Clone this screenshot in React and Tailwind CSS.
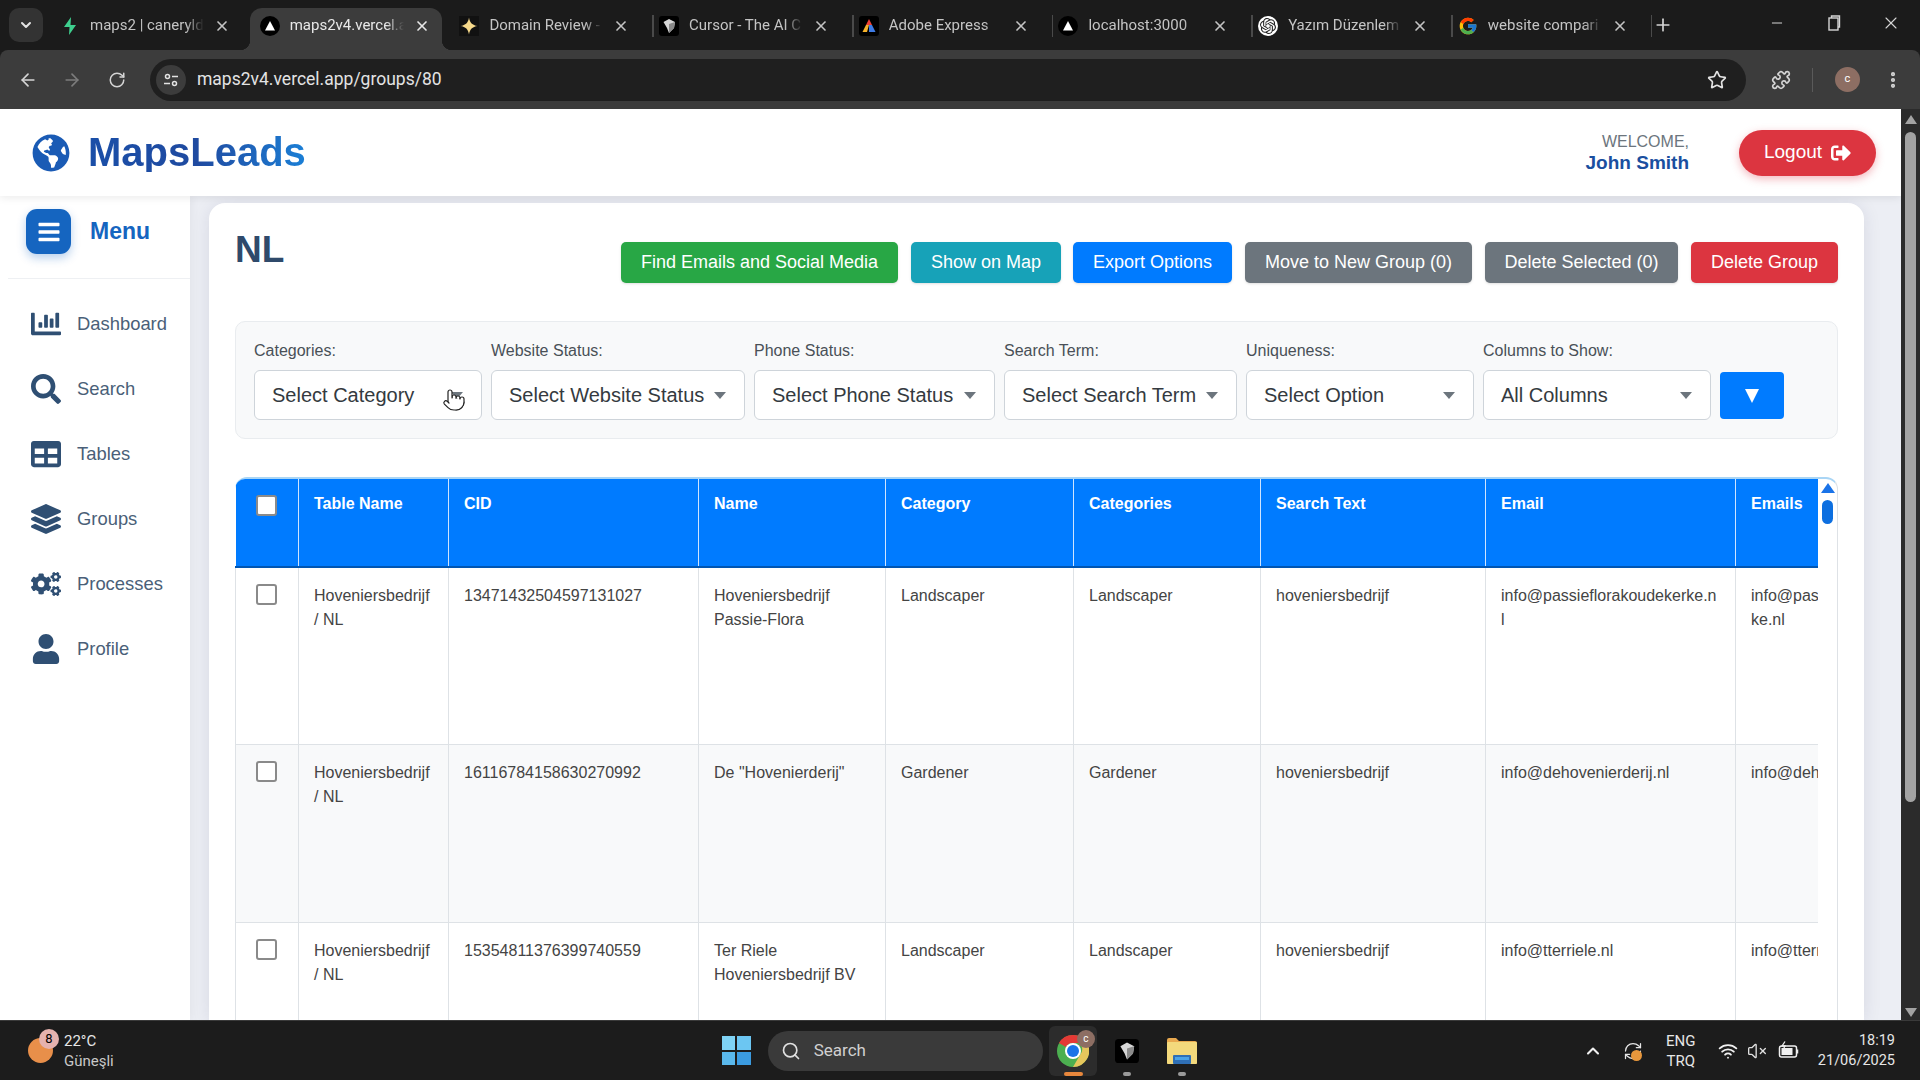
import { ArrowLeft, ArrowRight, RotateCw, Star, Puzzle, EllipsisVertical, ChevronDown, ChevronUp, X, Plus, Minus, Search, Pointer, Wifi, VolumeX, RefreshCw } from 'lucide-react';
import { FaBars, FaChartBar, FaCogs, FaGlobeAmericas, FaLayerGroup, FaSearch, FaSignOutAlt, FaTable, FaUser } from 'react-icons/fa';
import { FcGoogle } from 'react-icons/fc';
import { SiOpenai } from 'react-icons/si';

/* ─── Favicons ───────────────────────────────────────────────────────── */
function BoltIcon() {
  return (
    <svg viewBox="0 0 20 20" className="w-5 h-5">
      <polygon points="11,1 4,11 9.5,11 9,19 16,9 10.5,9" fill="#3ecf8e" />
    </svg>
  );
}

function VercelIcon() {
  return (
    <svg viewBox="0 0 20 20" className="w-5 h-5">
      <circle cx="10" cy="10" r="10" fill="#000" />
      <polygon points="10,5 15,14.5 5,14.5" fill="#fff" />
    </svg>
  );
}

function SparkIcon() {
  return (
    <svg viewBox="0 0 20 20" className="w-5 h-5">
      <rect width="20" height="20" fill="#111" />
      <path d="M10 1.5C10.6 6.5 13.5 9.4 18.5 10 13.5 10.6 10.6 13.5 10 18.5 9.4 13.5 6.5 10.6 1.5 10 6.5 9.4 9.4 6.5 10 1.5Z" fill="#f6d98b" />
    </svg>
  );
}

function CubeIcon({ size = 'w-5 h-5' }) {
  return (
    <svg viewBox="0 0 20 20" className={size}>
      <rect width="20" height="20" rx="3" fill="#000" />
      <polygon points="10,3 16,6 15,12 10,17 8,12 4.5,6" fill="#d6d6d6" />
      <polygon points="10,8 16,6 15,12 10,17" fill="#8a8a8a" />
    </svg>
  );
}

function AdobeIcon() {
  return (
    <svg viewBox="0 0 20 20" className="w-5 h-5">
      <rect width="20" height="20" rx="3" fill="#000" />
      <polygon points="10,3 13,9 7,9" fill="#ef4136" />
      <polygon points="7,9 10,9 8,16 3.5,16" fill="#f7b32b" />
      <polygon points="10,9 13,9 16.5,16 10,16" fill="#3e7be6" />
    </svg>
  );
}

function OpenAiIcon() {
  return (
    <span className="w-5 h-5 rounded-full bg-white flex items-center justify-center">
      <SiOpenai className="w-4 h-4 text-[#222]" />
    </span>
  );
}

function ChromeIcon() {
  return (
    <svg viewBox="0 0 32 32" className="w-[32px] h-[32px]">
      <circle cx="16" cy="16" r="16" fill="#4caf50" />
      <path d="M2 8A16 16 0 0 1 16 0 16 16 0 0 1 30 8H16A8 8 0 0 0 9 12Z" fill="#e53935" />
      <path d="M30 8A16 16 0 0 1 16 32L23 20A8 8 0 0 0 22 8Z" fill="#e6c65c" />
      <circle cx="16" cy="16" r="8" fill="#fff" />
      <circle cx="16" cy="16" r="6" fill="#1a73e8" />
    </svg>
  );
}

function FolderIcon() {
  return (
    <svg viewBox="0 0 30 26" className="w-[30px] h-[26px]">
      <path d="M0 2a2 2 0 0 1 2-2h7l3 3h16a2 2 0 0 1 2 2v19a2 2 0 0 1-2 2H2a2 2 0 0 1-2-2Z" fill="#e9a94f" />
      <rect y="4" width="30" height="22" rx="1" fill="#f3d97c" />
      <rect x="6" y="17" width="18" height="9" rx="1" fill="#2f6fb5" />
      <rect x="8" y="19" width="14" height="3" fill="#4aa3e8" />
    </svg>
  );
}

function BatteryIcon() {
  return (
    <svg viewBox="0 0 22 20" className="w-[22px] h-[20px]" fill="none">
      <rect x="2.5" y="5" width="17" height="11" rx="2" stroke="#f0f0f0" strokeWidth="1.5" />
      <rect x="4.5" y="7" width="11" height="7" fill="#f0f0f0" />
      <path d="M20.5 8.5v4" stroke="#f0f0f0" strokeWidth="1.5" />
      <path d="M8 0.5 5 5h3L6.5 8" stroke="#f0f0f0" strokeWidth="1.3" />
    </svg>
  );
}

function WinLogo() {
  return (
    <div className="grid grid-cols-2 gap-[2px] w-[29px] h-[29px]">
      <span className="bg-[#7fd3f5]" />
      <span className="bg-[#6cc6f2]" />
      <span className="bg-[#5ab8ec]" />
      <span className="bg-[#3b9be0]" />
    </div>
  );
}

/* ─── Browser chrome ─────────────────────────────────────────────────── */
const TABS = [
  { title: 'maps2 | caneryld', icon: <BoltIcon /> },
  { title: 'maps2v4.vercel.a', icon: <VercelIcon />, active: true },
  { title: 'Domain Review -', icon: <SparkIcon /> },
  { title: 'Cursor - The AI C', icon: <CubeIcon /> },
  { title: 'Adobe Express', icon: <AdobeIcon /> },
  { title: 'localhost:3000', icon: <VercelIcon /> },
  { title: 'Yazım Düzenlem', icon: <OpenAiIcon /> },
  { title: 'website compari', icon: <FcGoogle className="w-5 h-5" /> },
];

function Tab({ tab, hideSep }) {
  return (
    <div className="flex-none w-[199.7px] h-[42px] pb-[7px] flex items-center relative">
      {tab.active && (
        <>
          <div className="absolute left-0 top-0 bottom-0 w-[192px] bg-[#3c3c3c] rounded-t-[12px]" />
          <div className="absolute left-[-10px] bottom-0 w-[10px] h-[10px] bg-[radial-gradient(circle_at_0_0,transparent_10px,#3c3c3c_10.5px)]" />
          <div className="absolute left-[192px] bottom-0 w-[10px] h-[10px] bg-[radial-gradient(circle_at_100%_0,transparent_10px,#3c3c3c_10.5px)]" />
        </>
      )}
      <span className="relative ml-[10px] w-5 h-5 flex-none">{tab.icon}</span>
      <span
        className={`relative ml-[10px] w-[114px] flex-none overflow-hidden whitespace-nowrap text-[15px] [mask-image:linear-gradient(to_right,black_84%,transparent)] ${
          tab.active ? 'text-[#e8e8e8]' : 'text-[#c4c4c4]'
        }`}
      >
        {tab.title}
      </span>
      <X className={`relative ml-[10px] w-[16px] h-[16px] flex-none ${tab.active ? 'text-[#e8e8e8]' : 'text-[#c4c4c4]'}`} strokeWidth={2.5} />
      {!hideSep && <span className="ml-[23px] w-[1.5px] h-[22px] bg-[#4a4a4a] flex-none" />}
    </div>
  );
}

function TabStrip() {
  return (
    <div className="h-[50px] bg-[#1b1b1b] flex items-start flex-none">
      <div className="ml-[9px] mt-[8px] w-[34px] h-[34px] rounded-[10px] bg-[#333] flex items-center justify-center flex-none">
        <ChevronDown className="w-4 h-4 text-[#e3e3e3]" strokeWidth={3} />
      </div>
      <div className="ml-[7px] mt-[8px] flex">
        {TABS.map((t, i) => (
          <Tab key={t.title} tab={t} hideSep={t.active || i === 0} />
        ))}
      </div>
      <Plus className="ml-[5px] mt-[15px] w-[20px] h-[20px] text-[#d5d5d5] flex-none" strokeWidth={2} />
      <div className="ml-auto flex items-center h-[46px] text-[#d5d5d5]">
        <Minus className="w-4 h-4 mr-[41px]" strokeWidth={1.5} />
        <svg viewBox="0 0 16 16" className="w-4 h-4 mr-[39px]" fill="none" stroke="currentColor" strokeWidth="1.4">
          <rect x="3" y="3" width="9" height="12" />
          <path d="M5.5 3V1h8v11h-1.5" />
        </svg>
        <X className="w-[20px] h-[20px] mr-[19px]" strokeWidth={1.3} />
      </div>
    </div>
  );
}

function Toolbar() {
  return (
    <div className="h-[59px] bg-[#3c3c3c] rounded-t-[8px] flex items-center flex-none text-[#d5d5d5]">
      <ArrowLeft className="ml-[18px] w-[20px] h-[20px]" strokeWidth={2} />
      <ArrowRight className="ml-[24px] w-[20px] h-[20px] text-[#7c7c7c]" strokeWidth={2} />
      <RotateCw className="ml-[26px] w-[18px] h-[18px]" strokeWidth={2} />
      <div className="ml-[24px] w-[1596px] h-[42px] rounded-full bg-[#1f1f1f] flex items-center">
        <span className="ml-[6px] w-[30px] h-[30px] rounded-full bg-[#3c3c3c] flex items-center justify-center">
          <svg viewBox="0 0 16 16" className="w-4 h-4" fill="none" stroke="#e3e3e3" strokeWidth="1.5">
            <circle cx="4.5" cy="4.5" r="2" />
            <path d="M9 4.5h6M1 11.5h6" />
            <circle cx="11.5" cy="11.5" r="2" />
          </svg>
        </span>
        <span className="ml-[11px] text-[17.5px] text-[#e3e3e3] font-['Roboto',sans-serif]">maps2v4.vercel.app/groups/80</span>
        <Star className="ml-auto mr-[19px] w-[20px] h-[20px] text-[#e3e3e3]" strokeWidth={2} />
      </div>
      <Puzzle className="ml-[25px] w-[20px] h-[20px]" strokeWidth={2} />
      <span className="ml-[21px] w-px h-[24px] bg-[#5a5a5a]" />
      <span className="ml-[22px] w-[25px] h-[25px] rounded-full bg-[#8d6e63] flex items-center justify-center text-[11px] text-white">c</span>
      <EllipsisVertical className="ml-[23px] w-[20px] h-[20px]" strokeWidth={3} />
    </div>
  );
}

/* ─── App header and sidebar ─────────────────────────────────────────── */
function AppHeader() {
  return (
    <header className="h-[87px] bg-white flex items-center flex-none relative z-20 shadow-[0_2px_8px_rgba(0,0,0,0.08)] font-['Liberation_Sans',sans-serif]">
      <FaGlobeAmericas className="ml-[32px] w-[38px] h-[38px] text-[#1a5bb5]" />
      <span className="ml-[18px] -mt-[2px] text-[40px] font-bold leading-none bg-gradient-to-r from-[#1a4fa8] via-[#1f4aa0] to-[#1a7fd6] bg-clip-text text-transparent">
        MapsLeads
      </span>
      <div className="ml-auto text-right leading-none">
        <div className="text-[16px] text-[#6c757d] mb-[3px]">WELCOME,</div>
        <div className="text-[19px] font-bold text-[#1a4f9f]">John Smith</div>
      </div>
      <button className="ml-[50px] mr-[25px] w-[137px] h-[46px] rounded-full bg-[#dc3540] text-white text-[19px] flex items-center justify-center gap-[9px] shadow-[0_3px_8px_rgba(220,53,69,0.35)]">
        Logout <FaSignOutAlt className="w-[20px] h-[20px]" />
      </button>
    </header>
  );
}

const NAV = [
  { label: 'Dashboard', icon: FaChartBar },
  { label: 'Search', icon: FaSearch },
  { label: 'Tables', icon: FaTable },
  { label: 'Groups', icon: FaLayerGroup },
  { label: 'Processes', icon: FaCogs },
  { label: 'Profile', icon: FaUser },
];

function Sidebar() {
  return (
    <aside className="w-[190px] flex-none bg-white relative z-10 shadow-[3px_0_8px_rgba(0,0,0,0.04)]">
      <div className="ml-[8px] h-[83px] pl-[18px] pt-[13px] border-b border-[#eef0f3] flex items-start gap-[19px]">
        <div className="w-[45px] h-[45px] rounded-[11px] bg-[#1565c0] flex items-center justify-center shadow-[0_4px_10px_rgba(21,101,192,0.3)]">
          <FaBars className="w-[24px] h-[24px] text-white" />
        </div>
        <span className="text-[23px] font-bold text-[#1565c0] leading-[44px]">Menu</span>
      </div>
      <nav className="pt-[12px]">
        {NAV.map(({ label, icon: Icon }) => (
          <div key={label} className="h-[65px] pl-[31px] flex items-center gap-[16px]">
            <span className="w-[30px] flex justify-center">
              <Icon className="h-[30px] w-auto text-[#2f4f73]" />
            </span>
            <span className="text-[18.4px] text-[#4a5f78]">{label}</span>
          </div>
        ))}
      </nav>
    </aside>
  );
}

/* ─── Filters ────────────────────────────────────────────────────────── */
const FILTERS = [
  { label: 'Categories:', value: 'Select Category', width: 'w-[228px]', cursor: true },
  { label: 'Website Status:', value: 'Select Website Status', width: 'w-[254px]' },
  { label: 'Phone Status:', value: 'Select Phone Status', width: 'w-[241px]' },
  { label: 'Search Term:', value: 'Select Search Term', width: 'w-[233px]' },
  { label: 'Uniqueness:', value: 'Select Option', width: 'w-[228px]' },
  { label: 'Columns to Show:', value: 'All Columns', width: 'w-[228px]' },
];

function Filters() {
  return (
    <div className="mt-[38px] h-[118px] rounded-[10px] bg-[#f8f9fa] border border-[#e9ecef] pl-[18px] pt-[17px] flex items-start gap-[9px]">
      {FILTERS.map(f => (
        <div key={f.label} className={`${f.width} flex-none`}>
          <div className="text-[16px] leading-[24px] mb-[7px] text-[#495057]">{f.label}</div>
          <div className="relative h-[50px] rounded-[6px] border border-[#ced4da] bg-white pl-[17px] pb-px flex items-center text-[20px] text-[#343a40]">
            {f.value}
            <span className="absolute right-[18px] top-[21px] w-0 h-0 border-x-[6px] border-x-transparent border-t-[7px] border-t-[#6c757d]" />
            {f.cursor && (
              <Pointer className="absolute right-[15px] top-[17px] w-[24px] h-[24px] text-[#222] fill-white" strokeWidth={1.2} />
            )}
          </div>
        </div>
      ))}
      <button className="mt-[33px] w-[64px] h-[47px] rounded-[4px] bg-[#007bff] flex items-center justify-center flex-none">
        <svg viewBox="0 0 14 14" className="w-[14px] h-[14px]">
          <polygon points="0,0 14,0 7,14" fill="#fff" />
        </svg>
      </button>
    </div>
  );
}

/* ─── Table ──────────────────────────────────────────────────────────── */
const COLUMNS = [
  { label: 'Table Name', key: 'table', width: 'w-[150px]' },
  { label: 'CID', key: 'cid', width: 'w-[250px]' },
  { label: 'Name', key: 'name', width: 'w-[187px]' },
  { label: 'Category', key: 'category', width: 'w-[188px]' },
  { label: 'Categories', key: 'categories', width: 'w-[187px]' },
  { label: 'Search Text', key: 'search', width: 'w-[225px]' },
  { label: 'Email', key: 'email', width: 'w-[250px]' },
  { label: 'Emails', key: 'emails', width: 'w-[222px]' },
];

const ROWS = [
  {
    table: 'Hoveniersbedrijf / NL',
    cid: '13471432504597131027',
    name: 'Hoveniersbedrijf Passie-Flora',
    category: 'Landscaper',
    categories: 'Landscaper',
    search: 'hoveniersbedrijf',
    email: 'info@passieflorakoudekerke.nl',
    emails: 'info@passieflorakoudekerke.nl',
    height: 'h-[177px]',
  },
  {
    table: 'Hoveniersbedrijf / NL',
    cid: '16116784158630270992',
    name: 'De "Hovenierderij"',
    category: 'Gardener',
    categories: 'Gardener',
    search: 'hoveniersbedrijf',
    email: 'info@dehovenierderij.nl',
    emails: 'info@dehovenierderij.nl',
    height: 'h-[178px]',
  },
  {
    table: 'Hoveniersbedrijf / NL',
    cid: '15354811376399740559',
    name: 'Ter Riele Hoveniersbedrijf BV',
    category: 'Landscaper',
    categories: 'Landscaper',
    search: 'hoveniersbedrijf',
    email: 'info@tterriele.nl',
    emails: 'info@tterriele.nl',
    height: 'h-[178px]',
  },
];

function DataTable() {
  return (
    <div className="mt-[38px] flex rounded-t-[12px] border-t-2 border-t-[#a9d5f5] border-r border-r-[#dee2e6]">
      <div className="w-[1583px] flex-none overflow-hidden rounded-tl-[10px]">
        <table className="w-[1722px] table-fixed border-collapse text-[16px] leading-[24px]">
          <thead>
            <tr className="h-[88px] bg-[#007bff] text-white border-b-2 border-b-[#0056b3]">
              <th className="w-[63px] p-0 align-top border-r border-r-[#cfe4ff]">
                <input type="checkbox" readOnly className="block appearance-none ml-[20px] mt-[16px] w-[21px] h-[21px] rounded-[3px] bg-white border-2 border-[#8a8a8a]" />
              </th>
              {COLUMNS.map(c => (
                <th key={c.key} className={`${c.width} px-[15px] pt-[13px] align-top text-left font-bold border-r border-r-[#cfe4ff]`}>
                  {c.label}
                </th>
              ))}
            </tr>
          </thead>
          <tbody className="text-[#444]">
            {ROWS.map((row, i) => (
              <tr key={row.cid} className={`${row.height} ${i % 2 === 1 ? 'bg-[#f8f9fa]' : 'bg-white'}`}>
                <td className="p-0 align-top border border-[#dee2e6]">
                  <input type="checkbox" readOnly className="block appearance-none ml-[20px] mt-[16px] w-[21px] h-[21px] rounded-[3px] bg-white border-2 border-[#8a8a8a]" />
                </td>
                {COLUMNS.map(c => (
                  <td key={c.key} className="px-[15px] pt-[16px] align-top border border-[#dee2e6] [overflow-wrap:anywhere]">
                    {row[c.key]}
                  </td>
                ))}
              </tr>
            ))}
          </tbody>
        </table>
      </div>
      <div className="w-[19px] flex-none pt-[4px] flex flex-col items-center">
        <span className="w-0 h-0 border-x-[7px] border-x-transparent border-b-[10px] border-b-[#1a73e8]" />
        <span className="mt-[7px] w-[11px] h-[24px] rounded-full bg-[#0d6fe0]" />
      </div>
    </div>
  );
}

/* ─── Main card ──────────────────────────────────────────────────────── */
const ACTIONS = [
  { label: 'Find Emails and Social Media', style: 'w-[277px] bg-[#28a745]' },
  { label: 'Show on Map', style: 'w-[150px] bg-[#17a2b8] -mr-px' },
  { label: 'Export Options', style: 'w-[159px] bg-[#007bff]' },
  { label: 'Move to New Group (0)', style: 'w-[227px] bg-[#6c757d]' },
  { label: 'Delete Selected (0)', style: 'w-[193px] bg-[#6c757d]' },
  { label: 'Delete Group', style: 'w-[147px] bg-[#dc3540]' },
];

function MainCard() {
  return (
    <main className="ml-[19px] mt-[7px] w-[1655px] flex-none rounded-t-[16px] bg-white px-[26px] pt-[39px] shadow-[0_2px_18px_rgba(30,30,80,0.1)]">
      <div className="flex items-start">
        <h1 className="-mt-[12px] text-[37px] leading-[40px] font-bold text-[#2f4a6b]">NL</h1>
        <div className="ml-auto flex gap-[13px]">
          {ACTIONS.map(a => (
            <button key={a.label} className={`${a.style} h-[41px] rounded-[5px] text-white text-[18px] shadow-sm whitespace-nowrap`}>
              {a.label}
            </button>
          ))}
        </div>
      </div>
      <Filters />
      <DataTable />
    </main>
  );
}

function PageScrollbar() {
  return (
    <div className="w-[19px] flex-none bg-[#2b2b2b] flex flex-col items-center pt-[6px] pb-[3px]">
      <span className="w-0 h-0 border-x-[6px] border-x-transparent border-b-[9px] border-b-[#a3a3a3]" />
      <span className="mt-[8px] w-[11px] h-[670px] rounded-full bg-[#a3a3a3]" />
      <span className="mt-auto w-0 h-0 border-x-[6px] border-x-transparent border-t-[9px] border-t-[#a3a3a3]" />
    </div>
  );
}

/* ─── Taskbar ────────────────────────────────────────────────────────── */
function Taskbar() {
  return (
    <footer className="h-[60px] bg-[#1c1c1c] border-t border-t-[#3a3a3a] flex items-center flex-none text-[15px] text-[#e6e6e6] font-['Roboto',sans-serif]">
      <div className="relative ml-[28px] w-[36px] h-[26px] flex-none">
        <span className="absolute left-0 top-0 w-[25px] h-[25px] rounded-full bg-[#e88f4a]" />
        <span className="absolute left-[11px] -top-[9px] w-[20px] h-[20px] rounded-full bg-[#e5b2ae] text-black text-[13px] leading-[20px] text-center">8</span>
      </div>
      <div className="leading-[20px]">
        <div>22°C</div>
        <div className="text-[#c8c8c8]">Güneşli</div>
      </div>
      <div className="ml-[608px]"><WinLogo /></div>
      <div className="ml-[17px] w-[275px] h-[40px] rounded-full bg-[#3a3a3a] flex items-center">
        <Search className="ml-[13px] w-[20px] h-[20px] text-[#e0e0e0]" strokeWidth={2} />
        <span className="ml-[13px] text-[17px] text-[#d0d0d0]">Search</span>
      </div>
      <div className="relative ml-[6px] w-[48px] h-[50px] rounded-[6px] bg-[#2c2c2c] flex items-center justify-center">
        <ChromeIcon />
        <span className="absolute right-[2px] top-[4px] w-[18px] h-[18px] rounded-full bg-[#8d6e63] text-[10px] leading-[18px] text-center text-white">c</span>
        <span className="absolute left-[15px] bottom-0 w-[19px] h-[4px] rounded-full bg-[#e8873c]" />
      </div>
      <div className="relative ml-[17px] w-[26px] h-[50px] flex items-center justify-center">
        <CubeIcon size="w-[24px] h-[24px]" />
        <span className="absolute left-[9px] bottom-0 w-[8px] h-[4px] rounded-full bg-[#9a9a9a]" />
      </div>
      <div className="relative ml-[27px] w-[30px] h-[50px] flex items-center justify-center">
        <FolderIcon />
        <span className="absolute left-[11px] bottom-0 w-[8px] h-[4px] rounded-full bg-[#9a9a9a]" />
      </div>
      <ChevronUp className="ml-[386px] w-[20px] h-[20px] text-[#f0f0f0]" strokeWidth={2.5} />
      <div className="relative ml-[20px] w-[20px] h-[24px] flex items-center">
        <RefreshCw className="w-[22px] h-[22px] text-[#e6e6e6]" strokeWidth={1.5} />
        <span className="absolute left-[8px] top-[11px] w-[11px] h-[11px] rounded-full bg-[#e8973c]" />
      </div>
      <div className="ml-[21px] w-[34px] text-center leading-[20px]">
        <div>ENG</div>
        <div>TRQ</div>
      </div>
      <Wifi className="ml-[20px] w-[20px] h-[20px] text-[#f0f0f0]" strokeWidth={2.2} />
      <VolumeX className="ml-[9px] w-[20px] h-[20px] text-[#e0e0e0]" strokeWidth={1.6} />
      <span className="ml-[10px]"><BatteryIcon /></span>
      <div className="ml-auto mr-[25px] text-right leading-[20px] text-[14.5px]">
        <div>18:19</div>
        <div>21/06/2025</div>
      </div>
    </footer>
  );
}

export default function App() {
  return (
    <div className="w-[1920px] h-[1080px] overflow-hidden flex flex-col bg-[#1b1b1b] font-['Liberation_Sans',Arial,sans-serif]">
      <div className="font-['Roboto',sans-serif]">
        <TabStrip />
        <Toolbar />
      </div>
      <div className="flex-1 min-h-0 flex bg-white overflow-hidden">
        <div className="flex-1 min-w-0 flex flex-col overflow-hidden">
          <AppHeader />
          <div className="flex-1 min-h-0 flex bg-[#eceef4] overflow-hidden">
            <Sidebar />
            <MainCard />
          </div>
        </div>
        <PageScrollbar />
      </div>
      <Taskbar />
    </div>
  );
}
